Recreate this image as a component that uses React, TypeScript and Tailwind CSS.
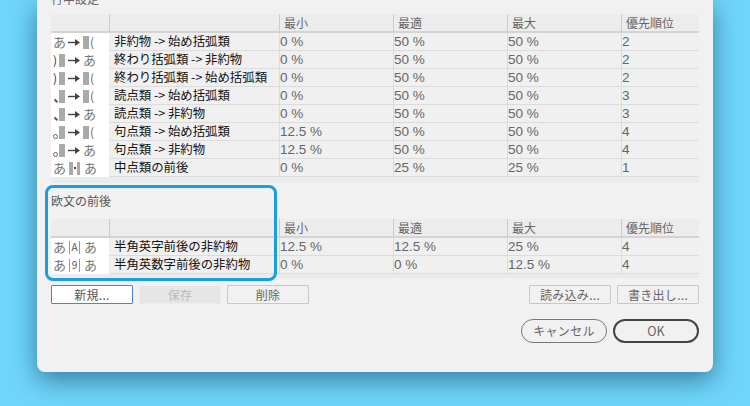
const font = "[font-family:'Noto_Sans_CJK_JP',sans-serif]"

function Bar() {
  return <span className="inline-block w-[6px] h-[13px] bg-[#aaaaaa]"></span>
}

function Arrow() {
  return (
    <svg width="12" height="9" viewBox="0 0 12 9" className="mx-[3px] shrink-0">
      <path d="M0 4.5H8" stroke="#444" strokeWidth="1.4" />
      <path d="M7 1L12 4.5L7 8Z" fill="#444" />
    </svg>
  )
}

const A = () => <span className="w-[13px] -mr-[1px] text-[13px] leading-[16px] text-[#777]">あ</span>
const Open = () => (
  <>
    <Bar />
    <span className="text-[12px] leading-[16px] text-[#666] ml-[1px]">(</span>
  </>
)
const Close = () => (
  <>
    <span className="w-[6px] text-[12px] leading-[16px] text-[#333]">)</span>
    <Bar />
  </>
)
const Comma = () => (
  <>
    <span className="w-[6px] flex justify-center">
      <span className="w-[1.5px] h-[4px] mt-[9px] bg-[#555] -rotate-45"></span>
    </span>
    <Bar />
  </>
)
const Period = () => (
  <>
    <span className="w-[6px]">
      <span className="block w-[5px] h-[5px] mt-[8px] rounded-full border border-[#666]"></span>
    </span>
    <Bar />
  </>
)

function Pair({ from, to }: { from: React.ReactNode; to: React.ReactNode }) {
  return (
    <span className="flex items-center">
      <span className="w-[12px] flex items-center">{from}</span>
      <Arrow />
      {to}
    </span>
  )
}

const rows = [
  { icon: <Pair from={<A />} to={<Open />} />, name: "非約物 -> 始め括弧類", v: ["0 %", "50 %", "50 %", "2"] },
  { icon: <Pair from={<Close />} to={<A />} />, name: "終わり括弧類 -> 非約物", v: ["0 %", "50 %", "50 %", "2"] },
  { icon: <Pair from={<Close />} to={<Open />} />, name: "終わり括弧類 -> 始め括弧類", v: ["0 %", "50 %", "50 %", "2"] },
  { icon: <Pair from={<Comma />} to={<Open />} />, name: "読点類 -> 始め括弧類", v: ["0 %", "50 %", "50 %", "3"] },
  { icon: <Pair from={<Comma />} to={<A />} />, name: "読点類 -> 非約物", v: ["0 %", "50 %", "50 %", "3"] },
  { icon: <Pair from={<Period />} to={<Open />} />, name: "句点類 -> 始め括弧類", v: ["12.5 %", "50 %", "50 %", "4"] },
  { icon: <Pair from={<Period />} to={<A />} />, name: "句点類 -> 非約物", v: ["12.5 %", "50 %", "50 %", "4"] },
  {
    icon: (
      <span className="flex items-center">
        <A />
        <span className="w-[11px] flex items-center justify-between mx-[4px]">
          <span className="w-[4px] h-[13px] bg-[#aaaaaa]"></span>
          <span className="w-[2px] h-[2px] bg-[#444]"></span>
          <span className="w-[3px] h-[13px] bg-[#aaaaaa]"></span>
        </span>
        <A />
      </span>
    ),
    name: "中点類の前後",
    v: ["0 %", "25 %", "25 %", "1"],
  },
]

function Latin({ ch }: { ch: string }) {
  return (
    <span className="flex items-center">
      <A />
      <span className="w-[11px] mx-[4px] flex items-center justify-center h-[13px] border-x border-[#999] text-[10px] leading-[12px] text-[#555]">{ch}</span>
      <A />
    </span>
  )
}

const rows2 = [
  { icon: <Latin ch="A" />, name: "半角英字前後の非約物", v: ["12.5 %", "12.5 %", "25 %", "4"] },
  { icon: <Latin ch="9" />, name: "半角英数字前後の非約物", v: ["0 %", "0 %", "12.5 %", "4"] },
]

const cols = "grid grid-cols-[58px_170px_114px_114px_114px_77px]"

function Table({ data, footer }: { data: typeof rows; footer: string }) {
  return (
    <div className={`w-[648px] bg-[#ebebeb] ${footer}`}>
      <div className={`${cols} h-[19px] border-b-2 border-[#d4d4d4] bg-[#ececec] text-[12px] leading-[17px] text-[#666]`}>
        <div></div>
        <div className="border-l border-[#ccc]"></div>
        {["最小", "最適", "最大", "優先順位"].map((h) => (
          <div key={h} className="border-l border-[#ccc] pl-[4px]">{h}</div>
        ))}
      </div>
      {data.map((r) => (
        <div key={r.name} className={`${cols} h-[18px] border-b border-[#dcdcdc] bg-[#f0f0f0]`}>
          <div className="bg-white pl-[2px] flex items-center overflow-hidden">{r.icon}</div>
          <div className="pl-[5px] text-[12.4px] leading-[17px] text-[#111] whitespace-nowrap">{r.name}</div>
          {r.v.map((x, i) => (
            <div key={i} className="border-l border-[#dcdcdc] font-['Liberation_Sans',sans-serif] text-[13.5px] leading-[18px] text-[#666]">{x}</div>
          ))}
        </div>
      ))}
    </div>
  )
}

function Btn({ label, className }: { label: string; className?: string }) {
  return (
    <button className={`w-[82px] h-[19px] border rounded-[1px] text-[12px] leading-none tracking-wide ${className ?? "border-[#c8c8c8] bg-[#f1f1f1] text-[#666]"}`}>
      {label}
    </button>
  )
}

export default function App() {
  return (
    <div className={`w-[750px] h-[406px] overflow-hidden bg-[#6fd6fb] pl-[37px] ${font}`}>
      <div className="relative w-[676px] h-[372px] overflow-hidden rounded-b-[8px] bg-[#f1f1f1] shadow-[0_8px_26px_rgba(10,50,80,0.55)] pl-[14px] pr-[14px]">
        <div className="-mt-[9px] h-[23px] text-[12px] leading-[16px] text-[#666]">行中設定</div>
        <Table data={rows} footer="pb-[6px]" />

        <div className="mt-[10px] h-[27px] text-[12px] leading-[16px] text-[#555]">欧文の前後</div>
        <Table data={rows2} footer="pb-[4px] mt-[-1px]" />

        <div className="flex gap-[6px] mt-[7px]">
          <Btn label="新規..." className="border-[#4a86d8] bg-white text-[#555]" />
          <Btn label="保存" className="border-[#ececec] bg-[#e6e6e6] text-[#bbb]" />
          <Btn label="削除" />
          <div className="flex-1"></div>
          <Btn label="読み込み..." />
          <Btn label="書き出し..." />
        </div>

        <div className="flex justify-end gap-[6px] mt-[15px]">
          <button className="w-[86px] h-[24px] rounded-full border border-[#777] text-[12px] leading-none tracking-wide text-[#666]">キャンセル</button>
          <button className="w-[86px] h-[24px] rounded-full border-2 border-[#444] text-[12.5px] leading-none text-[#666]">OK</button>
        </div>

        {/* highlight box over the second table */}
        <div className="absolute left-[8px] top-[185px] w-[232px] h-[96px] rounded-[8px] border-[3px] border-[#1b9ede]"></div>
      </div>
    </div>
  )
}
